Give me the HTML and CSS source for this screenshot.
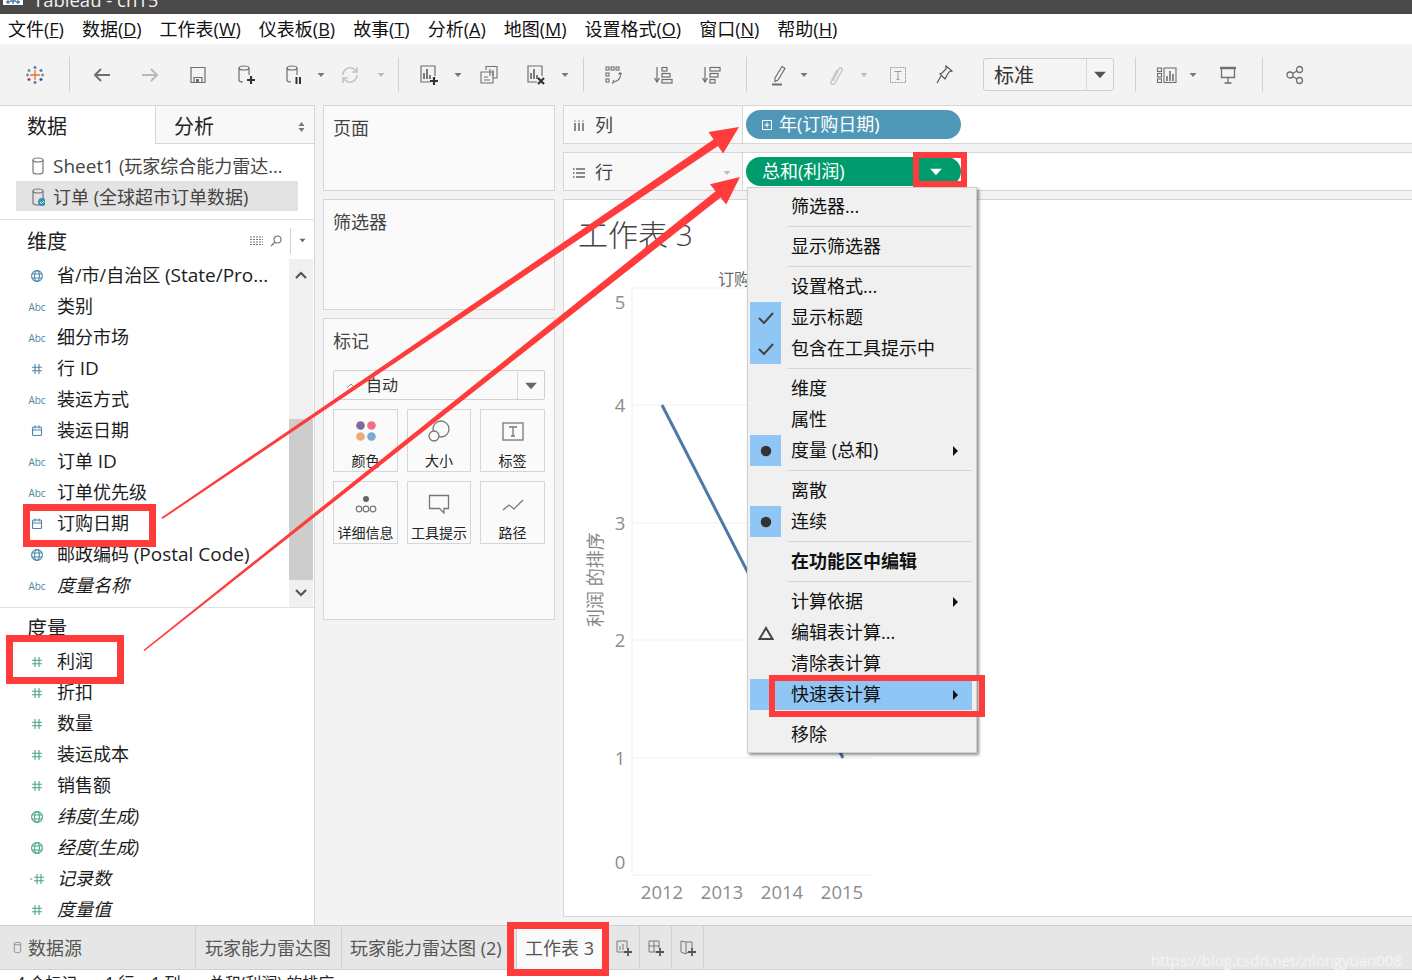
FILE: index.html
```html
<!DOCTYPE html>
<html lang="zh">
<head>
<meta charset="utf-8">
<title>Tableau - ch15</title>
<link rel="stylesheet" href="styles.css">
</head>
<body>
<svg class="defs" width="0" height="0">
  <symbol id="globe" viewBox="0 0 14 14"><g fill="none" stroke="currentColor" stroke-width="1.1"><circle cx="7" cy="7" r="5.4"/><ellipse cx="7" cy="7" rx="2.4" ry="5.4"/><path d="M1.6 5h10.8M1.6 9h10.8"/></g></symbol>
  <symbol id="cal" viewBox="0 0 14 14"><g fill="none" stroke="currentColor" stroke-width="1.1"><rect x="2.5" y="3" width="9" height="8.5" rx="1"/><path d="M2.5 6h9M5 1.5v3M9 1.5v3"/></g></symbol>
  <symbol id="num" viewBox="0 0 14 14"><path d="M5 2v10M9 2v10M2 5.300h10M2 8.700h10" fill="none" stroke="currentColor" stroke-width="1.100"/></symbol>
  <symbol id="numd" viewBox="0 0 14 14"><path d="M7 2v10M11 2v10M4 5.300h10M4 8.700h10M0 7h2.500" fill="none" stroke="currentColor" stroke-width="1.100"/></symbol>
  <symbol id="db" viewBox="0 0 14 20"><g fill="none" stroke="currentColor" stroke-width="1.2"><ellipse cx="7" cy="4" rx="5" ry="2"/><path d="M2 4v12c0 1.2 2.2 2 5 2s5-.8 5-2V4"/></g></symbol>
  <symbol id="dd" viewBox="0 0 8 6"><path d="M0.5 1h7L4 5z" fill="currentColor"/></symbol>
</svg>

<header class="titlebar">
  <svg class="app-icon" width="20" height="14" viewBox="0 0 20 14"><rect width="20" height="14" fill="#fff"/><path d="M10 7v6M7 10h6M5 9v4M3 11h4M15 9v4M13 11h4" stroke="#4e79a7" stroke-width="1.300"/></svg>
  <span class="title-text">Tableau - ch15</span>
</header>

<nav class="menubar">
  <span>文件(<u>F</u>)</span><span>数据(<u>D</u>)</span><span>工作表(<u>W</u>)</span><span>仪表板(<u>B</u>)</span><span>故事(<u>T</u>)</span><span>分析(<u>A</u>)</span><span>地图(<u>M</u>)</span><span>设置格式(<u>O</u>)</span><span>窗口(<u>N</u>)</span><span>帮助(<u>H</u>)</span>
</nav>

<div class="toolbar">
  <svg class="ti" width="20" height="20" viewBox="0 0 20 20" fill="none" stroke-width="1.3"><path d="M10 5v10M5 10h10" stroke="#e8762c"/><path d="M10 1v3M8.500 2.500h3M10 16v3M8.500 17.500h3" stroke="#5b6f9c"/><path d="M4 4v3M2.500 5.500h3" stroke="#4e96b8"/><path d="M16 4v3M14.500 5.500h3" stroke="#4e79a7"/><path d="M4 13v3M2.500 14.500h3" stroke="#c72035"/><path d="M16 13v3M14.500 14.500h3" stroke="#2d4a7c"/><path d="M1 10h3M2.500 8.500v3M16 10h3M17.500 8.500v3" stroke="#6b8fb5"/></svg>
  <i class="tsep"></i>
  <svg class="ti" width="20" height="20" viewBox="0 0 20 20" fill="none" stroke="#6f6f6f" stroke-width="2"><path d="M18 10H3M9 4l-6 6 6 6"/></svg>
  <svg class="ti" width="20" height="20" viewBox="0 0 20 20" fill="none" stroke="#b9b9b9" stroke-width="2"><path d="M2 10h15M11 4l6 6-6 6"/></svg>
  <svg class="ti" width="20" height="20" viewBox="0 0 20 20" fill="none" stroke="#6f6f6f" stroke-width="1.200"><path d="M3 2.500h14v15H3z"/><path d="M6 17.500v-5h8v5"/><rect x="8" y="14" width="3" height="3" fill="#6f6f6f" stroke="none"/></svg>
  <svg class="ti" width="20" height="22" viewBox="0 0 20 22" fill="none" stroke="#6f6f6f" stroke-width="1.200"><ellipse cx="8" cy="4" rx="5" ry="2"/><path d="M3 4v12c0 1 1.500 2 4 2M13 4v7"/><path d="M15 12v8M11 16h8" stroke="#333" stroke-width="2.200"/></svg>
  <svg class="ti" width="20" height="22" viewBox="0 0 20 22" fill="none" stroke="#6f6f6f" stroke-width="1.200"><ellipse cx="8" cy="4" rx="5" ry="2"/><path d="M3 4v12c0 1 1.500 2 4 2M13 4v7"/><path d="M12.500 13v7M16 13v7" stroke="#333" stroke-width="2"/></svg>
  <svg class="tdd" width="8" height="6"><use href="#dd"/></svg>
  <svg class="ti" width="20" height="20" viewBox="0 0 20 20" fill="none" stroke="#c4c4c4" stroke-width="1.600"><path d="M3 10a7 7 0 0 1 12-5l2 2M17 10a7 7 0 0 1-12 5l-2-2"/><path d="M17 2v5h-5M3 18v-5h5"/></svg>
  <svg class="tdd off" width="8" height="6"><use href="#dd"/></svg>
  <i class="tsep"></i>
  <svg class="ti" width="20" height="22" viewBox="0 0 20 22" fill="none" stroke="#6f6f6f" stroke-width="1.200"><path d="M11 18H2V2h14v10"/><path d="M5 15V9M8 15V5M11 15v-4" stroke-width="1.800"/><path d="M15 13v8M11 17h8" stroke="#333" stroke-width="2.200"/></svg>
  <svg class="tdd" width="8" height="6"><use href="#dd"/></svg>
  <svg class="ti" width="20" height="20" viewBox="0 0 20 20" fill="none" stroke="#6f6f6f" stroke-width="1.100"><path d="M7 5V1.500h11V13h-4"/><path d="M2 7h12v11H2z"/><path d="M11 11V4M14 11V5M5 15h6M5 12h4"/></svg>
  <svg class="ti" width="20" height="22" viewBox="0 0 20 22" fill="none" stroke="#6f6f6f" stroke-width="1.200"><path d="M11 18H2V2h14v10"/><path d="M5 15V9M8 15V5M11 15v-4" stroke-width="1.800"/><path d="M12 14l6 6M18 14l-6 6" stroke="#333" stroke-width="2.200"/></svg>
  <svg class="tdd" width="8" height="6"><use href="#dd"/></svg>
  <i class="tsep"></i>
  <svg class="ti" width="20" height="20" viewBox="0 0 20 20" fill="none" stroke="#6f6f6f" stroke-width="1.100"><rect x="2" y="2" width="3" height="3"/><rect x="7" y="2" width="3" height="3"/><rect x="12" y="2" width="3" height="3"/><rect x="2" y="8" width="3" height="3"/><rect x="2" y="14" width="3" height="3"/><path d="M16 8c1.500 4-1 8-6 9M9 15l1 2-2 1.500M14.500 9.500l1.500-1.800 1.800 1.300"/></svg>
  <svg class="ti" width="20" height="20" viewBox="0 0 20 20" fill="none" stroke="#6f6f6f" stroke-width="1.200"><path d="M4 2v14M1.500 13L4 17l2.500-4"/><rect x="9" y="2.500" width="5" height="3.500"/><rect x="9" y="8.500" width="8" height="3.500"/><rect x="9" y="14.500" width="10" height="3.500"/></svg>
  <svg class="ti" width="20" height="20" viewBox="0 0 20 20" fill="none" stroke="#6f6f6f" stroke-width="1.200"><path d="M4 2v14M1.500 13L4 17l2.500-4"/><rect x="9" y="2.500" width="10" height="3.500"/><rect x="9" y="8.500" width="8" height="3.500"/><rect x="9" y="14.500" width="5" height="3.500"/></svg>
  <i class="tsep"></i>
  <svg class="ti" width="20" height="22" viewBox="0 0 20 22" fill="none" stroke="#6f6f6f" stroke-width="1.200"><path d="M6 14L13 2.500l3 2L9 16l-3 1.500z"/><path d="M3 20.500h10" stroke-width="2"/></svg>
  <svg class="tdd" width="8" height="6"><use href="#dd"/></svg>
  <svg class="ti" width="20" height="22" viewBox="0 0 20 22" fill="none" stroke="#c4c4c4" stroke-width="1.300"><path d="M7 17l6-12c1-2 4-1 3 1.500L9 19c-1.500 2.500-5 1-4-1.500L11 6"/></svg>
  <svg class="tdd off" width="8" height="6"><use href="#dd"/></svg>
  <svg class="ti" width="18" height="20" viewBox="0 0 18 20" fill="none" stroke="#9a9a9a"><rect x="1.500" y="2.500" width="15" height="15" stroke-dasharray="2 1"/><path d="M5.500 6.500h7M9 6.500v8M7.500 14.500h3"/></svg>
  <svg class="ti" width="20" height="22" viewBox="0 0 20 22" fill="none" stroke="#555" stroke-width="1.200"><path d="M12 2l6 5-3 1-3 5-1 2-5-5 2-1 4-4zM7 12l-4 7"/></svg>
  <div class="combo"><span class="combo-text">标准</span><span class="combo-btn"><svg width="14" height="10"><use href="#dd"/></svg></span></div>
  <i class="tsep"></i>
  <svg class="ti" width="22" height="20" viewBox="0 0 22 20" fill="none" stroke="#6f6f6f" stroke-width="1.100"><rect x="1.500" y="3" width="4" height="3.500"/><rect x="1.500" y="8.500" width="4" height="3.500"/><rect x="1.500" y="14" width="4" height="3.500"/><rect x="8" y="3" width="12" height="14.500"/><path d="M11 16v-5M14 16V6M17 16V9" stroke-width="1.600"/></svg>
  <svg class="tdd" width="8" height="6"><use href="#dd"/></svg>
  <svg class="ti" width="20" height="20" viewBox="0 0 20 20" fill="none" stroke="#6f6f6f" stroke-width="1.300"><path d="M2 3h16" stroke-width="2.400"/><path d="M3.500 3v9.500h13V3M10 12.500V18M6.500 18h7"/></svg>
  <i class="tsep"></i>
  <svg class="ti" width="20" height="20" viewBox="0 0 20 20" fill="none" stroke="#6f6f6f" stroke-width="1.300"><circle cx="5" cy="10" r="3"/><circle cx="14.500" cy="4.500" r="3"/><circle cx="14.500" cy="15.500" r="3"/><path d="M7.600 8.500l4.300-2.500M7.600 11.500l4.300 2.500"/></svg>
</div>

<main class="workspace">
  <aside class="data-pane">
    <div class="pane-tabs">
      <div class="tab-data">数据</div>
      <div class="tab-analysis"><span>分析</span><svg width="7" height="12" viewBox="0 0 7 12"><path d="M0.500 5L3.500 1l3 4zM0.500 7l3 4 3-4z" fill="#777"/></svg></div>
    </div>
    <div class="sources">
      <div class="source"><svg class="src-ic" width="14" height="20"><use href="#db"/></svg><span><span class="lat">Sheet1 </span>(玩家综合能力雷达...</span></div>
      <div class="source active"><svg class="src-ic" width="14" height="20" viewBox="0 0 14 20"><use href="#db"/><circle cx="11" cy="15" r="4" fill="#3f8fb0"/><path d="M9 15l1.500 1.500L13 14" fill="none" stroke="#fff"/></svg><span>订单 (全球超市订单数据)</span></div>
    </div>
    <div class="section-head">
      <span>维度</span>
      <div class="head-tools">
        <svg width="13" height="10" viewBox="0 0 13 10"><path d="M0 1h13M0 3.500h13M0 6h13M0 8.500h13" stroke="#777" stroke-dasharray="2 1"/></svg>
        <svg width="12" height="12" viewBox="0 0 12 12" fill="none" stroke="#777" stroke-width="1.200"><circle cx="7.500" cy="4.500" r="3.500"/><path d="M5 7l-4 4"/></svg>
        <i class="head-line"></i>
        <svg class="head-dd" width="7" height="5"><use href="#dd"/></svg>
      </div>
    </div>
    <div class="dim-wrap">
      <ul class="fields dims">
        <li><svg class="fi blue" width="14" height="14"><use href="#globe"/></svg><span>省/市/自治区 <span class="lat">(State/Pro...</span></span></li>
        <li><b class="abc">Abc</b><span>类别</span></li>
        <li><b class="abc">Abc</b><span>细分市场</span></li>
        <li><svg class="fi blue" width="14" height="14"><use href="#num"/></svg><span>行 <span class="lat">ID</span></span></li>
        <li><b class="abc">Abc</b><span>装运方式</span></li>
        <li><svg class="fi blue" width="14" height="14"><use href="#cal"/></svg><span>装运日期</span></li>
        <li><b class="abc">Abc</b><span>订单 <span class="lat">ID</span></span></li>
        <li><b class="abc">Abc</b><span>订单优先级</span></li>
        <li><svg class="fi blue" width="14" height="14"><use href="#cal"/></svg><span>订购日期</span></li>
        <li><svg class="fi blue" width="14" height="14"><use href="#globe"/></svg><span>邮政编码 <span class="lat">(Postal Code)</span></span></li>
        <li><b class="abc">Abc</b><em>度量名称</em></li>
      </ul>
      <div class="scroller">
        <div class="scroll-btn"><svg width="12" height="8" viewBox="0 0 12 8" fill="none" stroke="#555" stroke-width="2.200"><path d="M1 7l5-5 5 5"/></svg></div>
        <div class="scroll-track"></div>
        <div class="scroll-thumb"></div>
        <div class="scroll-btn low"><svg width="12" height="8" viewBox="0 0 12 8" fill="none" stroke="#555" stroke-width="2.200"><path d="M1 1l5 5 5-5"/></svg></div>
      </div>
    </div>
    <div class="section-head measures">度量</div>
    <ul class="fields">
      <li><svg class="fi green" width="14" height="14"><use href="#num"/></svg><span>利润</span></li>
      <li><svg class="fi green" width="14" height="14"><use href="#num"/></svg><span>折扣</span></li>
      <li><svg class="fi green" width="14" height="14"><use href="#num"/></svg><span>数量</span></li>
      <li><svg class="fi green" width="14" height="14"><use href="#num"/></svg><span>装运成本</span></li>
      <li><svg class="fi green" width="14" height="14"><use href="#num"/></svg><span>销售额</span></li>
      <li><svg class="fi green" width="14" height="14"><use href="#globe"/></svg><em>纬度(生成)</em></li>
      <li><svg class="fi green" width="14" height="14"><use href="#globe"/></svg><em>经度(生成)</em></li>
      <li><svg class="fi green" width="14" height="14"><use href="#numd"/></svg><em>记录数</em></li>
      <li><svg class="fi green" width="14" height="14"><use href="#num"/></svg><em>度量值</em></li>
    </ul>
  </aside>

  <section class="cards-col">
    <div class="card card-pages"><h3>页面</h3></div>
    <div class="card card-filters"><h3>筛选器</h3></div>
    <div class="card card-marks">
      <h3>标记</h3>
      <div class="mark-select">
        <svg width="10" height="6" viewBox="0 0 10 6" fill="none" stroke="#888"><path d="M1 5l4-4 4 4"/></svg>
        <span>自动</span>
        <b class="mark-btn"><svg width="14" height="10"><use href="#dd"/></svg></b>
      </div>
      <div class="mark-grid">
        <div class="mark"><svg width="22" height="22" viewBox="0 0 22 22"><circle cx="5.500" cy="5.500" r="4.300" fill="#7f6a9e"/><circle cx="16.500" cy="5.500" r="4.300" fill="#f0708a"/><circle cx="5.500" cy="16.500" r="4.300" fill="#f2a97c"/><circle cx="16.500" cy="16.500" r="4.300" fill="#7ba7d4"/></svg><span>颜色</span></div>
        <div class="mark"><svg width="24" height="22" viewBox="0 0 24 22" fill="none" stroke="#777" stroke-width="1.300"><circle cx="14" cy="9" r="8"/><circle cx="7" cy="16" r="5" fill="#fafafa"/></svg><span>大小</span></div>
        <div class="mark"><svg width="22" height="20" viewBox="0 0 22 20" fill="none" stroke="#777" stroke-width="1.300"><rect x="1" y="1" width="20" height="17"/><path d="M7 5h8M11 5v9M9 14h4"/></svg><span>标签</span></div>
        <div class="mark"><svg width="24" height="20" viewBox="0 0 24 20" fill="none" stroke="#777" stroke-width="1.200"><circle cx="12" cy="5" r="3" fill="#666" stroke="none"/><circle cx="5" cy="15" r="2.800"/><circle cx="12" cy="15" r="2.800"/><circle cx="19" cy="15" r="2.800"/></svg><span>详细信息</span></div>
        <div class="mark"><svg width="22" height="20" viewBox="0 0 22 20" fill="none" stroke="#777" stroke-width="1.300"><path d="M1.500 1.500h19v13H16V19l-4.500-4.500h-10z"/></svg><span>工具提示</span></div>
        <div class="mark"><svg width="22" height="16" viewBox="0 0 22 16" fill="none" stroke="#777" stroke-width="1.300"><path d="M1 12l6-5 5 4 9-9"/></svg><span>路径</span></div>
      </div>
    </div>
  </section>

  <section class="view-col">
    <div class="shelf">
      <div class="shelf-label"><svg width="12" height="12" viewBox="0 0 12 12"><path d="M2 3v8M6 3v8M10 3v8" stroke="#666" stroke-width="1.500"/><path d="M2 .500v1M6 .500v1M10 .500v1" stroke="#666" stroke-width="1.500"/></svg><span>列</span></div>
      <div class="shelf-body"><div class="pill pill-blue"><svg width="10" height="10" viewBox="0 0 10 10" fill="none" stroke="#fff"><rect x=".5" y=".5" width="9" height="9"/><path d="M2.500 5h5M5 2.500v5"/></svg><span>年(订购日期)</span></div></div>
    </div>
    <div class="shelf">
      <div class="shelf-label"><svg width="12" height="12" viewBox="0 0 12 12"><path d="M3 2h9M3 6h9M3 10h9M0 2h1.500M0 6h1.500M0 10h1.500" stroke="#666" stroke-width="1.500"/></svg><span>行</span><svg class="shelf-dd" width="8" height="6"><use href="#dd"/></svg></div>
      <div class="shelf-body"><div class="pill pill-green"><span>总和(利润)</span><svg class="pill-dd" width="14" height="10"><use href="#dd"/></svg></div></div>
    </div>
    <div class="chart-card">
      <div class="chart-title">工作表 3</div>
      <svg class="chart" width="848" height="646" viewBox="564 270 848 646">
        <g stroke="#efefef" fill="none"><path d="M632 288V875M632 288H872M632 405H872M632 523H872M632 640H872M632 758H872M632 875H872"/></g>
        <path d="M662 405L843 758" stroke="#4e79a7" stroke-width="3" fill="none"/>
        <text class="axis-head" x="718" y="285">订购日期</text>
        <g class="tick" text-anchor="middle"><text x="620" y="309">5</text><text x="620" y="412">4</text><text x="620" y="530">3</text><text x="620" y="647">2</text><text x="620" y="765">1</text><text x="620" y="869">0</text></g>
        <g class="tick" text-anchor="middle"><text x="662" y="899">2012</text><text x="722" y="899">2013</text><text x="782" y="899">2014</text><text x="842" y="899">2015</text></g>
        <text class="axis-title" transform="translate(602 627) rotate(-90)">利润 的排序</text>
      </svg>
    </div>
  </section>
</main>

<footer class="sheet-tabs">
  <div class="stab stab-source"><svg width="9" height="13"><use href="#db"/></svg><span>数据源</span></div>
  <div class="stab stab-a">玩家能力雷达图</div>
  <div class="stab stab-b">玩家能力雷达图 (2)</div>
  <div class="stab stab-cur">工作表 3</div>
  <div class="stab-btn"><svg width="18" height="18" viewBox="0 0 18 18" fill="none" stroke="#777"><path d="M9 13H2V2h10v7M5 11V7M8 11V5"/><path d="M13 9v8M9 13h8" stroke="#555" stroke-width="1.800"/></svg></div>
  <div class="stab-btn"><svg width="18" height="18" viewBox="0 0 18 18" fill="none" stroke="#777"><path d="M9 13H2V2h10v7M2 7h10M7 2v11"/><path d="M13 9v8M9 13h8" stroke="#555" stroke-width="1.800"/></svg></div>
  <div class="stab-btn"><svg width="18" height="18" viewBox="0 0 18 18" fill="none" stroke="#777"><path d="M9 13L7 15V3L2 2v11l5 2M7 3h6v6"/><path d="M13 9v8M9 13h8" stroke="#555" stroke-width="1.800"/></svg></div>
</footer>
<div class="statusbar"><span>4 个标记</span><span>1 行 x 1 列</span><span>总和(利润) 的排序</span></div>

<div class="menu">
  <div class="mi"><i class="mc"></i><span>筛选器...</span></div>
  <hr>
  <div class="mi"><i class="mc"></i><span>显示筛选器</span></div>
  <hr>
  <div class="mi"><i class="mc"></i><span>设置格式...</span></div>
  <div class="mi"><i class="mc on"><svg width="16" height="12" viewBox="0 0 16 12" fill="none" stroke="#444" stroke-width="2"><path d="M1 6l5 5 9-10"/></svg></i><span>显示标题</span></div>
  <div class="mi"><i class="mc on"><svg width="16" height="12" viewBox="0 0 16 12" fill="none" stroke="#444" stroke-width="2"><path d="M1 6l5 5 9-10"/></svg></i><span>包含在工具提示中</span></div>
  <hr>
  <div class="mi"><i class="mc"></i><span>维度</span></div>
  <div class="mi"><i class="mc"></i><span>属性</span></div>
  <div class="mi"><i class="mc on"><b class="dot"></b></i><span>度量 (总和)</span><b class="sub"></b></div>
  <hr>
  <div class="mi"><i class="mc"></i><span>离散</span></div>
  <div class="mi"><i class="mc on"><b class="dot"></b></i><span>连续</span></div>
  <hr>
  <div class="mi"><i class="mc"></i><strong>在功能区中编辑</strong></div>
  <hr>
  <div class="mi"><i class="mc"></i><span>计算依据</span><b class="sub"></b></div>
  <div class="mi"><i class="mc"><svg width="16" height="14" viewBox="0 0 16 14" fill="none" stroke="#444" stroke-width="2"><path d="M8 2l6.500 11h-13z"/></svg></i><span>编辑表计算...</span></div>
  <div class="mi"><i class="mc"></i><span>清除表计算</span></div>
  <div class="mi hot"><i class="mc"></i><span>快速表计算</span><b class="sub"></b></div>
  <hr>
  <div class="mi"><i class="mc"></i><span>移除</span></div>
</div>

<svg class="arrows" width="1412" height="980" viewBox="0 0 1412 980">
  <polygon points="161.500,517.500 713.600,139.400 708.500,131.900 739,127 723.100,153.500 718,146 162.500,519" fill="#ff3b3b"/>
  <polygon points="143.500,650 715.600,191.300 710,184.200 740,177 726.200,204.600 720.600,197.500 144.500,651" fill="#ff3b3b"/>
</svg>
<div class="rbox rb-date"></div>
<div class="rbox rb-profit"></div>
<div class="rbox rb-dd"></div>
<div class="rbox rb-quick"></div>
<div class="rbox rb-sheet"></div>
<div class="watermark">https://blog.csdn.net/zilongyuan008</div>
</body>
</html>
```
FILE: styles.css
```css
* { box-sizing: border-box; }
html, body { margin: 0; padding: 0; }
body {
  position: relative;
  width: 1412px;
  height: 980px;
  overflow: hidden;
  background: #fff;
  color: #222;
  font: 18px/1.2 "Open Sans", "Noto Sans CJK SC", sans-serif;
}
.defs { position: absolute; }
i { font-style: normal; }
.lat { font-size: 19px; }

.titlebar {
  height: 14px;
  background: #4a4948;
  color: #f2f2f2;
  display: flex;
  overflow: hidden;
  padding-left: 3px;
}
.app-icon { flex: none; margin-top: -9px; }
.title-text { margin-left: 10px; margin-top: -12px; font-size: 18.500px; line-height: 24px; white-space: nowrap; }

.menubar {
  height: 30px;
  display: flex;
  align-items: center;
  gap: 18px;
  padding: 2px 0 0 8px;
  color: #111;
}

.toolbar {
  height: 61px;
  background: #f3f3f3;
  padding-left: 11px;
  display: grid;
  align-items: center;
  justify-items: center;
  grid-template-columns: 48px 20px 46px 50px 46px 50px 46px 8px 50px 12px 22px 40px 18px 44px 50px 8px 28px 34px 64px 32px 38px 28px 22px 42px 14px 54px 38px 151px 42px 22px 30px 40px 28px 38px;
}
.tsep { width: 1px; height: 35px; background: #d2d2d2; }
.tdd { color: #777; }
.tdd.off { color: #bcbcbc; }
.combo {
  justify-self: end;
  width: 131px;
  height: 33px;
  display: flex;
  border: 1px solid #cfcfcf;
  border-radius: 3px;
  background: #f5f5f5;
}
.combo-text { flex: 1; padding-left: 10px; font-size: 20px; line-height: 33px; color: #333; }
.combo-btn { width: 27px; border-left: 1px solid #d8d8d8; display: flex; align-items: center; justify-content: center; color: #555; }

.workspace {
  height: 820px;
  display: grid;
  grid-template-columns: 315px 232px 849px;
  column-gap: 8px;
  background: #f3f3f3;
}

.data-pane { background: #fff; border-right: 1px solid #d6d6d6; border-top: 1px solid #d6d6d6; }
.pane-tabs { height: 38px; display: flex; }
.tab-data { width: 155px; padding-left: 27px; font-size: 20px; line-height: 42px; color: #222; }
.tab-analysis {
  flex: 1;
  display: flex;
  align-items: center;
  justify-content: space-between;
  padding: 4px 9px 0 18px;
  font-size: 20px;
  background: #f8f8f8;
  border-left: 1px solid #d6d6d6;
  border-bottom: 1px solid #d6d6d6;
}
.sources { height: 76px; padding-top: 6px; border-bottom: 1px solid #e0e0e0; }
.source { height: 31px; display: flex; align-items: center; margin-left: 16px; width: 282px; padding-top: 2px; color: #444; white-space: nowrap; }
.source.active { height: 30px; padding-top: 3px; background: #e3e3e3; }
.src-ic { margin: -2px 8px 0 15px; color: #777; flex: none; }
.section-head {
  height: 39px;
  display: flex;
  align-items: center;
  justify-content: space-between;
  padding: 5px 0 0 27px;
  font-size: 20px;
}
.section-head.measures { height: 39px; padding-top: 3px; border-top: 1px solid #e0e0e0; }
.head-tools { display: flex; align-items: center; gap: 7px; margin-right: 8px; margin-top: -3px; }
.head-line { width: 1px; height: 26px; background: #d0d0d0; margin-left: 1px; }
.head-dd { color: #666; margin-left: 1px; }
.dim-wrap { display: flex; height: 348px; }
.fields { list-style: none; margin: 0; padding: 0; flex: 1; white-space: nowrap; }
.fields li { height: 31px; display: flex; align-items: center; color: #1c1c1c; }
.fields.dims li { padding-top: 2px; }
.fields em { font-style: italic; }
.fi { flex: none; margin: 0 13px 0 30px; }
.fi.blue { color: #4a87a8; }
.fi.green { color: #4ba583; }
.abc {
  flex: none;
  width: 24px;
  margin: 0 8px 0 25px;
  text-align: center;
  font-size: 10px;
  font-weight: 400;
  color: #4a87a8;
}
.scroller { width: 24px; margin-right: 1px; display: flex; flex-direction: column; background: #f0f0f0; }
.scroll-btn { height: 31px; display: flex; align-items: center; justify-content: center; }
.scroll-btn.low { height: 26px; }
.scroll-track { height: 129px; }
.scroll-thumb { height: 161px; background: #cdcdcd; }

.cards-col, .view-col { display: flex; flex-direction: column; gap: 8px; }
.card { background: #fafafa; border: 1px solid #d6d6d6; padding: 0 9px; }
.card h3 { margin: 0; font-size: 18px; font-weight: 400; color: #444; padding-top: 11px; line-height: 22px; }
.card-pages { height: 86px; }
.card-filters { height: 111px; }
.card-marks { height: 302px; }
.mark-select {
  height: 30px;
  margin-top: 18px;
  display: flex;
  align-items: center;
  padding: 1px 0 0 12px;
  border: 1px solid #d0d0d0;
  border-radius: 2px;
  font-size: 16px;
  color: #333;
}
.mark-select span { margin-left: 10px; flex: 1; }
.mark-btn { width: 27px; height: 100%; border-left: 1px solid #d8d8d8; display: flex; align-items: center; justify-content: center; color: #666; }
.mark-grid { display: grid; grid-template-columns: 65px 64px 65px; column-gap: 9px; row-gap: 9px; margin-top: 9px; }
.mark {
  height: 63px;
  border: 1px solid #d6d6d6;
  display: flex;
  flex-direction: column;
  align-items: center;
  justify-content: flex-end;
  padding-bottom: 1px;
  font-size: 14px;
  color: #222;
  white-space: nowrap;
}
.mark svg { margin-bottom: 11px; }

.shelf { height: 39px; display: flex; background: #fff; border-top: 1px solid #d6d6d6; border-bottom: 1px solid #d6d6d6; }
.shelf-label {
  width: 180px;
  background: #f8f8f8;
  border-left: 1px solid #d6d6d6;
  border-right: 1px solid #d6d6d6;
  display: flex;
  align-items: center;
  padding: 2px 0 0 9px;
  color: #444;
}
.shelf-label span { margin-left: 10px; flex: 1; }
.shelf-dd { color: #bdbdbd; margin-right: 11px; }
.shelf-body { flex: 1; padding: 4px 0 0 3px; }
.pill {
  height: 29px;
  border-radius: 15px;
  color: #fff;
  display: flex;
  align-items: center;
  white-space: nowrap;
}
.pill-blue { width: 215px; background: #4f97b7; padding-left: 16px; }
.pill-blue span { margin-left: 7px; }
.pill-green { width: 215px; background: #009b6d; padding-left: 16px; justify-content: space-between; }
.pill-dd { margin-right: 18px; color: #fff; }

.chart-card { height: 718px; background: #fff; border: 1px solid #d6d6d6; border-right: 0; overflow: hidden; }
.chart-title { height: 70px; padding: 14px 0 0 14px; font-size: 30px; line-height: 42px; color: #444; font-weight: 300; }
.chart { display: block; }
.tick text { font-size: 18.500px; fill: #8c8c8c; }
.axis-head { font-size: 16px; fill: #666; }
.axis-title { font-size: 18px; fill: #888; }

.sheet-tabs { height: 45px; display: flex; background: #e6e6e6; border-top: 1px solid #d0d0d0; border-bottom: 1px solid #d0d0d0; color: #555; white-space: nowrap; }
.stab { display: flex; align-items: center; height: 100%; padding-top: 3px; border-right: 1px solid #d2d2d2; }
.stab-source { width: 196px; padding-left: 13px; }
.stab-source svg { color: #777; margin-right: 6px; margin-top: -3px; }
.stab-a { width: 146px; padding-left: 9px; }
.stab-b { width: 174px; padding-left: 8px; border-right: 0; }
.stab-cur { width: 92px; padding-left: 8px; background: #fafafa; border-left: 1px solid #d2d2d2; border-right: 0; }
.stab-btn { width: 32px; height: 100%; display: flex; align-items: center; justify-content: center; border-right: 1px solid #d2d2d2; }
.statusbar { height: 10px; overflow: hidden; padding: 5px 0 0 16px; display: flex; gap: 28px; font-size: 16px; color: #222; line-height: 16px; }

.menu {
  position: absolute;
  left: 747px;
  top: 187px;
  width: 230px;
  height: 566px;
  padding: 3px 4px 0 2px;
  background: #f0f0f0;
  border: 1px solid #cfcfcf;
  box-shadow: 2px 2px 3px rgba(0, 0, 0, 0.45);
  color: #111;
  white-space: nowrap;
}
.menu hr { height: 1px; margin: 4px 0 4px 37px; border: 0; background: #d6d6d6; }
.mi { height: 31px; display: flex; align-items: center; position: relative; }
.mc { width: 31px; height: 31px; margin-right: 10px; display: flex; align-items: center; justify-content: center; flex: none; }
.mc.on { background: #90c6f6; }
.dot { width: 14px; height: 14px; border-radius: 50%; background: #333; display: block; transform: scale(.75); }
.sub { margin-left: auto; margin-right: 14px; border-left: 5px solid #111; border-top: 5px solid transparent; border-bottom: 5px solid transparent; }
.mi.hot { background: #90c6f6; }

.arrows { position: absolute; left: 0; top: 0; pointer-events: none; }
.rbox { position: absolute; border: 7px solid #ff3b3b; }
.rb-date { left: 23px; top: 504px; width: 133px; height: 43px; }
.rb-profit { left: 6px; top: 635px; width: 118px; height: 49px; }
.rb-dd { left: 913px; top: 152px; width: 54px; height: 35px; border-width: 6px; }
.rb-quick { left: 769px; top: 675px; width: 216px; height: 42px; border-width: 6px; }
.rb-sheet { left: 507px; top: 922px; width: 102px; height: 54px; }
.watermark { position: absolute; right: 10px; top: 950px; font-size: 15px; line-height: 20px; color: #f4f4f4; white-space: nowrap; }
```
